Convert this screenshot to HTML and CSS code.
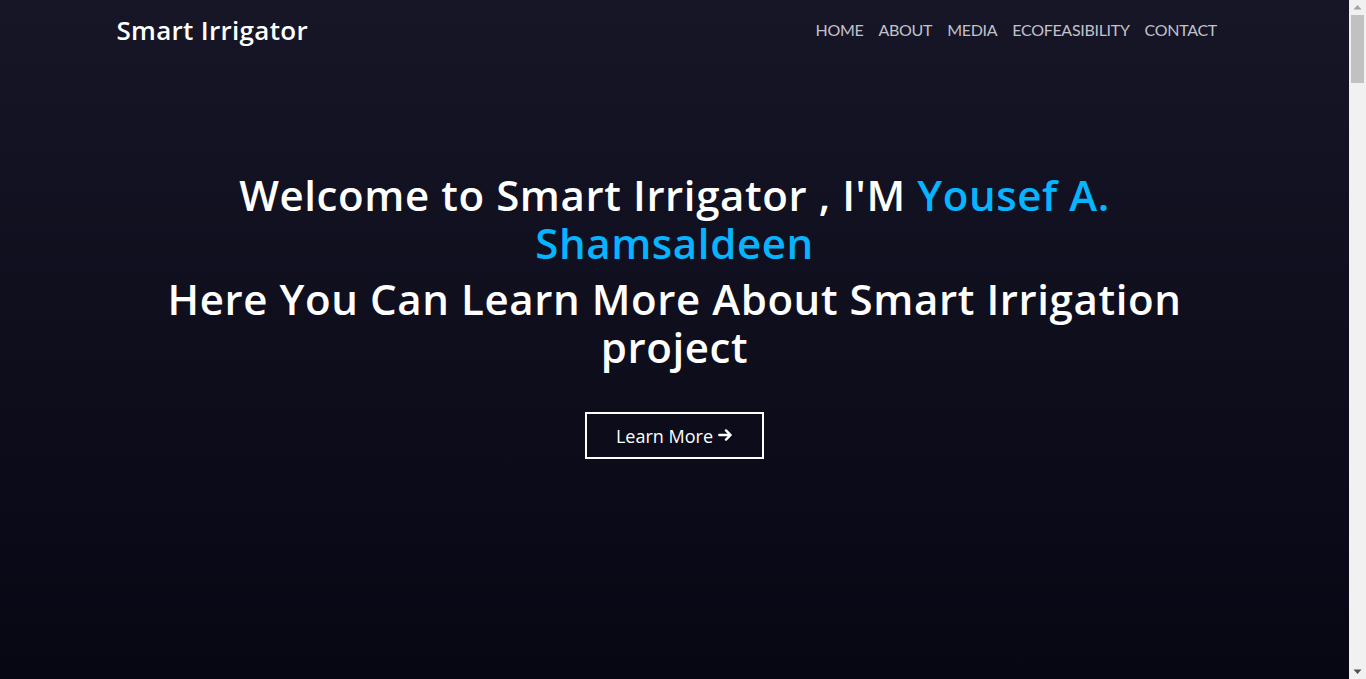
FILE: index.html
```html
<!DOCTYPE html>
<html lang="en">
<head>
<meta charset="utf-8">
<title>Smart Irrigator</title>
<link rel="stylesheet" href="styles.css">
</head>
<body>
<header class="navbar">
  <div class="container nav-inner">
    <a class="brand" href="#">Smart Irrigator</a>
    <nav class="nav-links">
      <a href="#">HOME</a>
      <a href="#">ABOUT</a>
      <a href="#">MEDIA</a>
      <a href="#">ECOFEASIBILITY</a>
      <a href="#">CONTACT</a>
    </nav>
  </div>
</header>
<section class="hero">
  <div class="container hero-inner">
    <h1 class="title">Welcome to Smart Irrigator , I'M <span class="accent">Yousef A.</span> <span class="accent">Shamsaldeen</span></h1>
    <h1 class="title">Here You Can Learn More About Smart Irrigation project</h1>
    <a class="btn" href="#">Learn More <svg class="arrow" viewBox="0 0 15 12" width="15" height="12"><path d="M1.3 6H12.6M8 1.4L12.6 6L8 10.6" fill="none" stroke="#fff" stroke-width="2.4" stroke-linecap="round" stroke-linejoin="round"/></svg></a>
  </div>
</section>
<section class="more"></section>
<div class="scrollbar" aria-hidden="true">
  <svg class="sb-btn" viewBox="0 0 17 15" width="17" height="15"><path d="M4.5 9.5H12.5L8.5 5Z" fill="#a3a3a3"/></svg>
  <div class="sb-thumb"></div>
  <div class="sb-space"></div>
  <svg class="sb-btn" viewBox="0 0 17 15" width="17" height="15"><path d="M4.5 5.5H12.5L8.5 10Z" fill="#505050"/></svg>
</div>
</body>
</html>
```
FILE: styles.css
```css
html, body {
  margin: 0;
  padding: 0;
}
body {
  background: #070714;
  font-family: "Open Sans", "Lato", sans-serif;
  color: #fff;
  margin-right: 17px;
  position: relative;
}
a { text-decoration: none; }
.container {
  max-width: 1140px;
  margin: 0 auto;
  padding: 0 15px;
  box-sizing: border-box;
}
.navbar {
  position: absolute;
  top: 0;
  left: 0;
  right: 0;
  z-index: 2;
}
.nav-inner {
  display: flex;
  align-items: center;
  justify-content: space-between;
  height: 59px;
}
.brand {
  color: #fff;
  font-size: 26px;
  font-weight: 600;
  letter-spacing: 0.3px;
  margin-left: -3px;
}
.nav-links {
  display: flex;
  margin-right: 5px;
}
.nav-links a {
  font-family: "Lato", sans-serif;
  color: #c2c2cb;
  font-size: 16px;
  padding: 0 7.5px;
  letter-spacing: -0.3px;
}
.hero {
  height: 679px;
  background: linear-gradient(180deg, #161627 0%, #0e0e1d 50%, #070714 100%);
  box-sizing: border-box;
  padding-top: 171px;
}
.hero-inner {
  display: flex;
  flex-direction: column;
  align-items: center;
  text-align: center;
}
.title {
  max-width: 1100px;
  font-size: 42px;
  font-weight: 600;
  line-height: 48px;
  margin: 0 0 8px;
  letter-spacing: 0.6px;
}
.accent { color: #06b4ff; }
.btn {
  margin-top: 33px;
  display: inline-flex;
  align-items: center;
  gap: 5px;
  border: 2px solid #fff;
  color: #fff;
  font-size: 18px;
  height: 47px;
  box-sizing: border-box;
  width: 179px;
  justify-content: center;
}
.arrow { margin-top: -2px; }
.more {
  height: 5800px;
  background: #070714;
}
.scrollbar {
  position: fixed;
  top: 0;
  right: 0;
  bottom: 0;
  width: 17px;
  background: #f1f1f1;
  display: flex;
  flex-direction: column;
  z-index: 10;
}
.sb-btn {
  display: block;
  flex: none;
}
.sb-thumb {
  flex: none;
  height: 68px;
  margin: 0 2px;
  background: #c1c1c1;
}
.sb-space { flex: 1; }
```
